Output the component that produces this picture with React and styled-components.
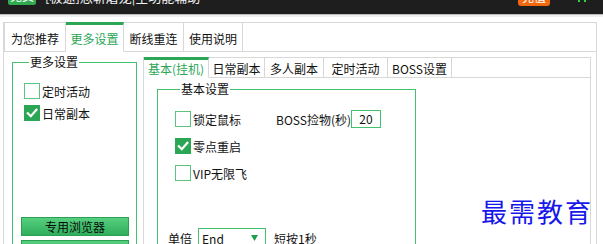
import React from 'react';
import styled, { createGlobalStyle } from 'styled-components';

const Global = createGlobalStyle`
  html, body { margin: 0; padding: 0; background: #fff; }
  body {
    font-family: "Noto Sans CJK SC", "Microsoft YaHei", sans-serif;
    font-size: 12px;
    color: #111;
    overflow: hidden;
  }
  * { box-sizing: border-box; }
`;

const GREEN = '#2aa655';
const GREEN_LINE = '#45c06f';
const GREY = '#d8d8d8';

const Window = styled.div`
  width: 603px;
  height: 244px;
  overflow: hidden;
  position: relative;
  background: #fff;
`;

const TitleBar = styled.div`
  height: 14px;
  background: #1e1e1e;
  display: flex;
  align-items: flex-end;
  padding: 0 17px 0 8px;
  overflow: hidden;
`;

const FreeBadge = styled.div`
  width: 28px;
  height: 18px;
  margin-bottom: 9px;
  background: #2faa4f;
  border-radius: 2px;
  color: #fff;
  font-size: 12px;
  line-height: 18px;
  text-align: center;
`;

const TitleText = styled.div`
  margin: 0 0 9px 9px;
  height: 16px;
  line-height: 16px;
  font-size: 13px;
  color: #f2f2f2;
  white-space: nowrap;
`;

const PayBadge = styled.div`
  margin: 0 0 8px auto;
  width: 32px;
  height: 18px;
  background: #f2680e;
  border-radius: 3px;
  color: #fff;
  font-size: 12px;
  line-height: 18px;
  text-align: center;
`;

const Dots = styled.div`
  margin: 0 0 12px 28px;
  display: flex;
  gap: 4px;
`;

const Dot = styled.span`
  width: 2px;
  height: 2px;
  background: #27d53f;
`;

const Strip = styled.div`
  height: 8px;
  background: linear-gradient(#bcbcbc 0 1px, #efefef 1px 3px, #fff 3px);
`;

const Frame = styled.div`
  margin: 0 6px 0 3px;
`;

const TabRow = styled.div`
  display: flex;
  height: ${p => p.$h}px;
  border-left: 1px solid ${GREY};
  border-right: 1px solid ${GREY};
`;

const Tab = styled.div`
  width: ${p => p.$w}px;
  flex: none;
  display: flex;
  align-items: center;
  justify-content: center;
  white-space: nowrap;
  border-right: 1px solid ${GREY};
  border-top: ${p => (p.$active ? `3px solid ${GREEN}` : `1px solid ${GREY}`)};
  border-bottom: 1px solid ${p => (p.$active ? '#fff' : GREY)};
  color: ${p => (p.$active ? GREEN : '#111')};
  padding-top: ${p => (p.$active ? 0 : 2)}px;
  font-size: 12px;
  letter-spacing: 0;
`;

const TabFill = styled.div`
  flex: 1;
  border-top: 1px solid ${GREY};
  border-bottom: 1px solid ${GREY};
`;

const Body = styled.div`
  display: flex;
  height: 200px;
  padding-left: 8px;
  border-left: 1px solid ${GREY};
  border-right: 1px solid ${GREY};
`;

const Group = styled.fieldset`
  margin: ${p => p.$top}px 0 0 0;
  padding: ${p => p.$padTop}px 0 0 ${p => p.$padLeft}px;
  width: ${p => p.$w}px;
  height: 400px;
  min-width: 0;
  flex: none;
  border: 1px solid ${GREEN_LINE};
  border-radius: 0;
`;

const Legend = styled.legend`
  margin-left: 5px;
  padding: 0 1px;
  font-size: 12px;
  line-height: 14px;
  color: #111;
`;

const CheckList = styled.div`
  display: flex;
  flex-direction: column;
  gap: ${p => p.$gap}px;
`;

const CheckItem = styled.label`
  display: flex;
  align-items: center;
  gap: 2px;
  height: ${p => p.$h || 16}px;
  width: ${p => (p.$w ? `${p.$w}px` : 'auto')};
  flex: none;
  white-space: nowrap;
`;

const Box = styled.span`
  width: 16px;
  height: 16px;
  flex: none;
  border: 1px solid ${p => (p.$on ? GREEN : '#5cc47f')};
  background: ${p => (p.$on ? GREEN : '#fff')};
  display: flex;
  align-items: center;
  justify-content: center;
`;

const Tick = () => (
  <svg width="12" height="12" viewBox="0 0 12 12">
    <path d="M1.8 6.2 L4.8 9.2 L10.4 2.8" fill="none" stroke="#fff" strokeWidth="2.2" strokeLinecap="square" />
  </svg>
);

const Check = ({ on, children, w, h }) => (
  <CheckItem $w={w} $h={h}>
    <Box $on={on}>{on && <Tick />}</Box>
    <span>{children}</span>
  </CheckItem>
);

const ButtonStack = styled.div`
  margin: 96px 0 0 -3px;
  display: flex;
  flex-direction: column;
  gap: 4px;
`;

const GreenButton = styled.div`
  width: 108px;
  height: 19px;
  border: 1px solid #2b9f52;
  background: linear-gradient(#56cf7e, #2fae5b);
  color: #0a0a0a;
  font-size: 12px;
  line-height: 17px;
  text-align: center;
`;

const InnerTabs = styled.div`
  margin: 5px 0 0 6px;
  width: 448px;
  flex: none;
  display: flex;
  flex-direction: column;
`;

const Panel = styled.div`
  flex: 1;
  padding-left: 13px;
  border-left: 1px solid ${GREY};
  border-right: 1px solid ${GREY};
`;

const Row = styled.div`
  display: flex;
  align-items: center;
  height: ${p => p.$h || 18}px;
  margin-top: ${p => p.$mt || 0}px;
  margin-left: ${p => p.$ml || 0}px;
  white-space: nowrap;
`;

const FieldLabel = styled.span`
  width: ${p => p.$w}px;
  flex: none;
`;

const NumBox = styled.div`
  width: 30px;
  height: 18px;
  border: 1px solid ${GREEN_LINE};
  text-align: center;
  line-height: 16px;
  font-size: 12px;
`;

const Combo = styled.div`
  width: 68px;
  height: 20px;
  margin: 0 8px 0 6px;
  border: 1px solid ${GREEN_LINE};
  display: flex;
  align-items: center;
  justify-content: space-between;
  padding: 0 7px 0 3px;
`;

const Watermark = styled.div`
  position: absolute;
  left: 481px;
  top: 196px;
  font-family: "Noto Sans CJK SC", serif;
  font-size: 26px;
  line-height: 30px;
  letter-spacing: 2px;
  color: #1717ec;
  white-space: nowrap;
`;

export default function App() {
  const main = [
    { t: '为您推荐', w: 61 },
    { t: '更多设置', w: 58, a: true },
    { t: '断线重连', w: 60 },
    { t: '使用说明', w: 59 },
  ];
  const inner = [
    { t: '基本(挂机)', w: 65, a: true },
    { t: '日常副本', w: 56 },
    { t: '多人副本', w: 59 },
    { t: '定时活动', w: 64 },
    { t: 'BOSS设置', w: 64 },
  ];
  return (
    <Window>
      <Global />
      <TitleBar>
        <FreeBadge>免费</FreeBadge>
        <TitleText>[极速]怒斩屠龙|全功能辅助</TitleText>
        <PayBadge>充值</PayBadge>
        <Dots>
          <Dot />
          <Dot />
        </Dots>
      </TitleBar>
      <Strip />
      <Frame>
        <TabRow $h={30}>
          <Tab $w={1} />
          {main.map(m => (
            <Tab key={m.t} $w={m.w} $active={m.a}>
              {m.t}
            </Tab>
          ))}
          <TabFill />
        </TabRow>
        <Body>
          <Group $top={3} $padTop={14} $padLeft={11} $w={125}>
            <Legend>更多设置</Legend>
            <CheckList $gap={6}>
              <Check>定时活动</Check>
              <Check on>日常副本</Check>
            </CheckList>
            <ButtonStack>
              <GreenButton>专用浏览器</GreenButton>
              <GreenButton>游戏设置</GreenButton>
            </ButtonStack>
          </Group>
          <InnerTabs>
            <TabRow $h={26}>
              {inner.map(m => (
                <Tab key={m.t} $w={m.w} $active={m.a}>
                  {m.t}
                </Tab>
              ))}
              <TabFill />
            </TabRow>
            <Panel>
              <Group $top={4} $padTop={14} $padLeft={17} $w={259}>
                <Legend>基本设置</Legend>
                <Row>
                  <Check w={101} h={18}>锁定鼠标</Check>
                  <FieldLabel $w={75}>BOSS捡物(秒)</FieldLabel>
                  <NumBox>20</NumBox>
                </Row>
                <Row $mt={9}>
                  <Check on h={18}>零点重启</Check>
                </Row>
                <Row $mt={9}>
                  <Check h={18}>VIP无限飞</Check>
                </Row>
                <Row $mt={46} $ml={-7} $h={20}>
                  <span>单倍</span>
                  <Combo>
                    <span>End</span>
                    <svg width="7" height="6" viewBox="0 0 7 6">
                      <path d="M0 0 H7 L3.5 6 Z" fill="#1f9d4c" />
                    </svg>
                  </Combo>
                  <span>短按1秒</span>
                </Row>
              </Group>
            </Panel>
          </InnerTabs>
        </Body>
      </Frame>
      <Watermark>最需教育</Watermark>
    </Window>
  );
}
